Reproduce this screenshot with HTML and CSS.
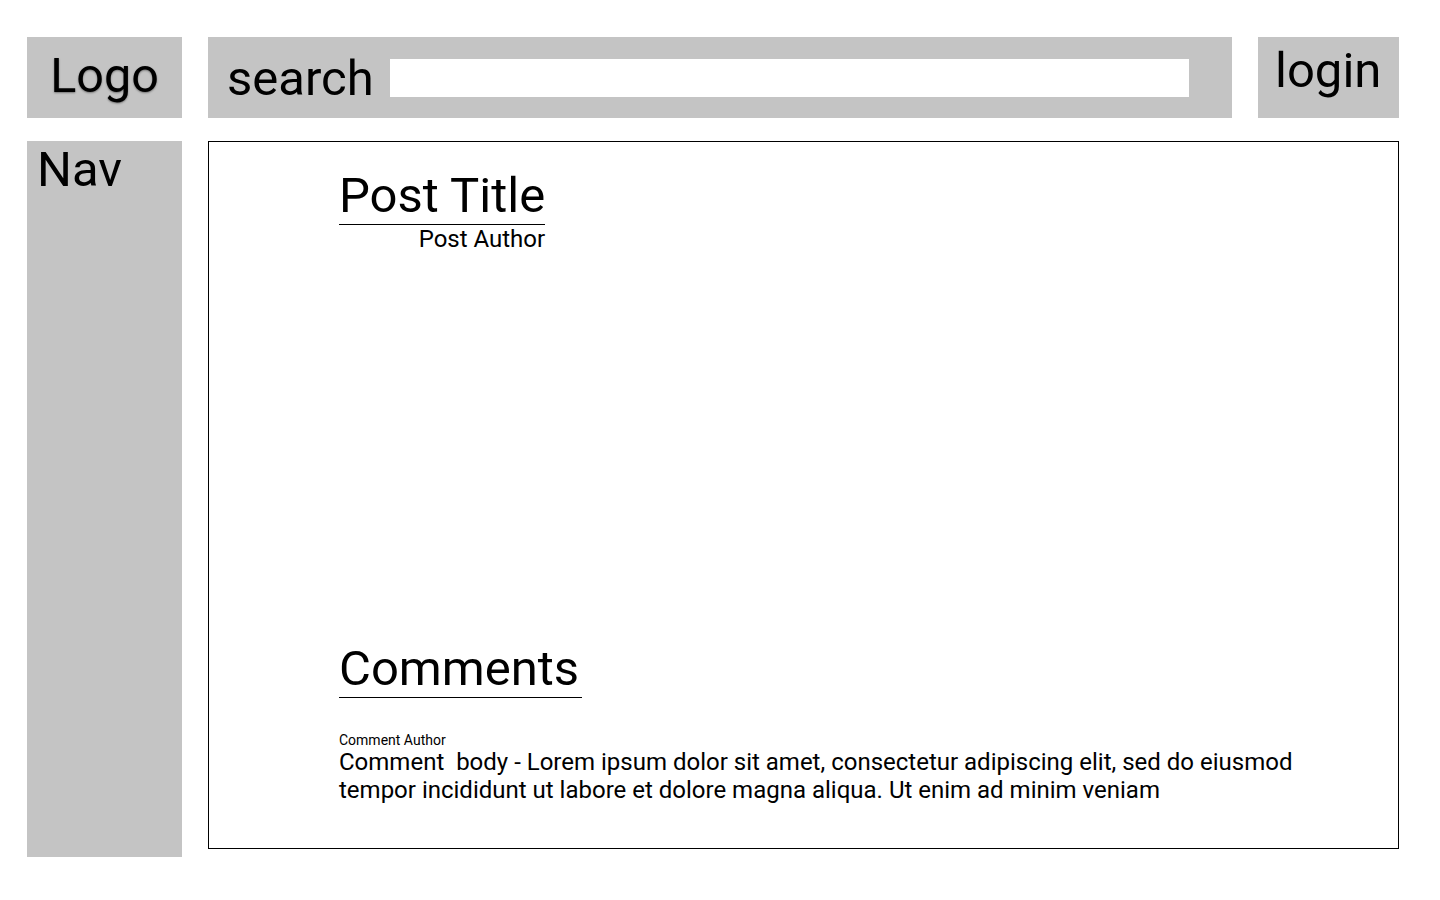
FILE: index.html
```html
<!DOCTYPE html>
<html lang="en">
<head>
<meta charset="utf-8">
<title>Post</title>
<link rel="stylesheet" href="styles.css">
</head>
<body>
<div class="page">
  <header class="header">
    <div class="logo">Logo</div>
    <div class="search">
      <span class="search-label">search</span>
      <div class="search-input"></div>
    </div>
    <div class="login">login</div>
  </header>
  <div class="layout">
    <nav class="nav">Nav</nav>
    <main class="main">
      <div class="post-head">
        <h1 class="post-title">Post Title</h1>
        <div class="post-author">Post Author</div>
      </div>
      <div class="post-body"></div>
      <h2 class="comments-title">Comments</h2>
      <div class="comment">
        <div class="comment-author">Comment Author</div>
        <p class="comment-body">Comment&nbsp; body - Lorem ipsum dolor sit amet, consectetur adipiscing elit, sed do eiusmod<br>tempor incididunt ut labore et dolore magna aliqua. Ut enim ad minim veniam</p>
      </div>
    </main>
  </div>
</div>
</body>
</html>
```

FILE: styles.css
```css
* { box-sizing: border-box; }

body {
  margin: 0;
  background: #ffffff;
  font-family: Roboto, "Liberation Sans", sans-serif;
  color: #000000;
}

.page {
  padding: 37px 0 0 27px;
  width: 1440px;
}

.header {
  display: flex;
  gap: 26px;
  height: 81px;
}

.logo {
  width: 155px;
  background: #c4c4c4;
  font-size: 48.5px;
  line-height: 56px;
  padding: 11px 0 0 0;
  text-align: center;
  text-shadow: 0 1px 2px rgba(0, 0, 0, 0.4);
}

.search {
  width: 1024px;
  background: #c4c4c4;
  display: flex;
  align-items: center;
  padding-left: 19px;
}

.search-label {
  font-size: 49px;
  line-height: 57px;
  margin-top: 1px;
}

.search-input {
  width: 799px;
  height: 38px;
  background: #ffffff;
  margin-left: 16px;
}

.login {
  width: 141px;
  background: #c4c4c4;
  font-size: 49px;
  line-height: 57px;
  padding: 5px 0 0 17px;
}

.layout {
  display: grid;
  grid-template-columns: 155px 1191px;
  column-gap: 26px;
  align-items: start;
  margin-top: 23px;
}

.nav {
  height: 716px;
  background: #c4c4c4;
  font-size: 49px;
  line-height: 57px;
  padding: 0 0 0 10px;
}

.main {
  height: 708px;
  border: 1px solid #000000;
  padding: 26px 0 0 130px;
}

.post-head {
  display: inline-flex;
  flex-direction: column;
}

.post-title {
  margin: 0;
  font-size: 49px;
  font-weight: 400;
  line-height: 56px;
  border-bottom: 1px solid #000000;
}

.post-author {
  text-align: right;
  font-size: 24px;
  line-height: 28px;
}

.post-body {
  height: 388px;
}

.comments-title {
  display: inline-block;
  margin: 0;
  font-size: 49px;
  font-weight: 400;
  line-height: 56px;
  padding-right: 3px;
  border-bottom: 1px solid #000000;
}

.comment {
  margin-top: 34px;
}

.comment-author {
  font-size: 14px;
  line-height: 16px;
}

.comment-body {
  margin: 0;
  font-size: 24px;
  line-height: 28px;
}
```
